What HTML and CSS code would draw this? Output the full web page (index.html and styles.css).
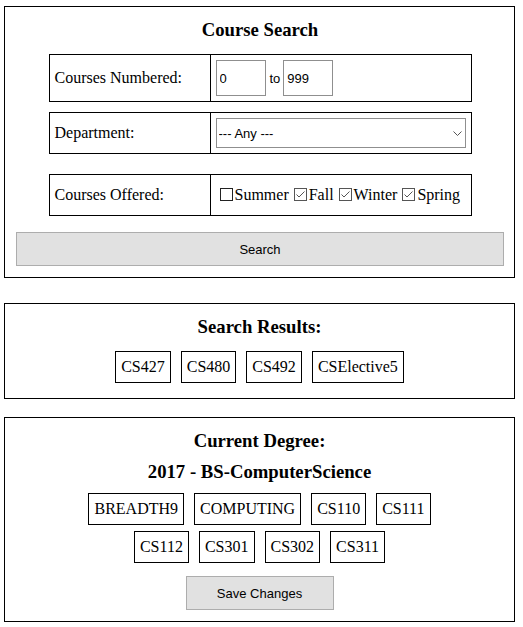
FILE: index.html
```html
<!DOCTYPE html>
<html>
<head>
<meta charset="utf-8">
<link rel="stylesheet" href="styles.css">
</head>
<body>
<div class="panel panel-search">
  <h3 class="title">Course Search</h3>
  <div class="field field-tall">
    <div class="field-label">Courses Numbered:</div>
    <div class="field-control">
      <input class="num" type="text" value="0"><span class="to">to</span><input class="num" type="text" value="999">
    </div>
  </div>
  <div class="field field-dept">
    <div class="field-label">Department:</div>
    <div class="field-control">
      <div class="select-wrap">
        <select class="select"><option>--- Any ---</option></select>
        <svg class="chev" width="9" height="5" viewBox="0 0 9 5"><path d="M0.5 0.5 L4.5 4.5 L8.5 0.5" fill="none" stroke="#555" stroke-width="1"/></svg>
      </div>
    </div>
  </div>
  <div class="field field-terms">
    <div class="field-label">Courses Offered:</div>
    <div class="field-control terms">
      <span class="term"><svg class="box" width="13" height="13" viewBox="0 0 13 13"><rect x="0.5" y="0.5" width="12" height="12" fill="none" stroke="#222"/></svg>Summer</span>
      <span class="term"><svg class="box" width="13" height="13" viewBox="0 0 13 13"><rect x="0.5" y="0.5" width="12" height="12" fill="none" stroke="#555"/><path d="M2.5 6.5 L5 9 L10.5 3.5" fill="none" stroke="#555"/></svg>Fall</span>
      <span class="term"><svg class="box" width="13" height="13" viewBox="0 0 13 13"><rect x="0.5" y="0.5" width="12" height="12" fill="none" stroke="#555"/><path d="M2.5 6.5 L5 9 L10.5 3.5" fill="none" stroke="#555"/></svg>Winter</span>
      <span class="term"><svg class="box" width="13" height="13" viewBox="0 0 13 13"><rect x="0.5" y="0.5" width="12" height="12" fill="none" stroke="#555"/><path d="M2.5 6.5 L5 9 L10.5 3.5" fill="none" stroke="#555"/></svg>Spring</span>
    </div>
  </div>
  <button class="btn btn-search">Search</button>
</div>

<div class="panel panel-results">
  <h3 class="title">Search Results:</h3>
  <div class="chips">
    <span class="chip">CS427</span>
    <span class="chip">CS480</span>
    <span class="chip">CS492</span>
    <span class="chip">CSElective5</span>
  </div>
</div>

<div class="panel panel-degree">
  <h3 class="title">Current Degree:</h3>
  <h3 class="title subtitle">2017 - BS-ComputerScience</h3>
  <div class="chips chips-degree">
    <span class="chip">BREADTH9</span>
    <span class="chip">COMPUTING</span>
    <span class="chip">CS110</span>
    <span class="chip">CS111</span>
    <span class="chip">CS112</span>
    <span class="chip">CS301</span>
    <span class="chip">CS302</span>
    <span class="chip">CS311</span>
  </div>
  <div class="save-row"><button class="btn btn-save">Save Changes</button></div>
</div>
</body>
</html>
```

FILE: styles.css
```css
html, body {
  margin: 0;
  padding: 0;
  background: #fff;
}
body {
  font-family: "Liberation Serif", "Times New Roman", serif;
  font-size: 16px;
  color: #000;
  padding-top: 6px;
}
.panel {
  box-sizing: border-box;
  width: 511px;
  margin-left: 4px;
  border: 1px solid #000;
  display: flex;
  flex-direction: column;
}
.panel-search {
  padding: 0 10px 11px 11px;
  margin-bottom: 25px;
}
.panel-results {
  padding-bottom: 15px;
  margin-bottom: 18px;
}
.panel-degree {
  padding-bottom: 11px;
}
.title {
  margin: 12px 0 0;
  font-size: 18.72px;
  font-weight: bold;
  line-height: 22px;
  text-align: center;
}
.panel-degree .subtitle {
  margin-top: 9px;
}
.field {
  display: grid;
  grid-template-columns: 161px 260px;
  border: 1px solid #000;
  margin: 0 auto;
  width: max-content;
}
.field-tall { margin-top: 13px; }
.field-dept { margin-top: 10px; }
.field-terms { margin-top: 20px; }
.field-label {
  box-sizing: border-box;
  border-right: 1px solid #000;
  padding-left: 5px;
  display: flex;
  align-items: center;
}
.field-control {
  display: flex;
  align-items: center;
  padding: 5px 0 5px 5px;
  font-family: "Liberation Sans", Arial, sans-serif;
  font-size: 13px;
}
.num {
  box-sizing: border-box;
  width: 50px;
  height: 36px;
  border: 1px solid #8f8f8f;
  padding: 0 3px;
  margin: 0;
  font-family: "Liberation Sans", Arial, sans-serif;
  font-size: 13px;
  color: #000;
  background: #fff;
}
.to {
  margin: 0 3px 0 4px;
}
.select-wrap {
  position: relative;
  width: 250px;
  height: 30px;
}
.select {
  box-sizing: border-box;
  width: 250px;
  height: 30px;
  border: 1px solid #8f8f8f;
  padding: 0 0 0 2px;
  margin: 0;
  background: #fff;
  appearance: none;
  -webkit-appearance: none;
  font-family: "Liberation Sans", Arial, sans-serif;
  font-size: 13px;
  color: #000;
  border-radius: 0;
}
.chev {
  position: absolute;
  left: 237px;
  top: 13px;
}
.terms {
  box-sizing: border-box;
  height: 40px;
  padding: 0 0 0 8px;
  font-family: "Liberation Serif", "Times New Roman", serif;
  font-size: 16px;
  gap: 4px;
}
.term {
  white-space: nowrap;
}
.box {
  vertical-align: -1px;
  margin: 0 2px 0 1px;
}
.btn {
  box-sizing: border-box;
  height: 34px;
  background: #e1e1e1;
  border: 1px solid #adadad;
  border-radius: 0;
  font-family: "Liberation Sans", Arial, sans-serif;
  font-size: 13px;
  color: #000;
  padding: 0;
}
.btn-search {
  width: 100%;
  margin-top: 16px;
}
.chips {
  display: flex;
  flex-wrap: wrap;
  justify-content: center;
  gap: 6px 10px;
  margin-top: 13px;
}
.chips-degree {
  width: 360px;
  margin: 10px auto 0;
}
.chip {
  border: 1px solid #000;
  padding: 6px 5px;
  line-height: 18px;
  font-size: 16px;
}
.save-row {
  display: flex;
  justify-content: center;
  margin-top: 13px;
}
.btn-save {
  width: 148px;
}
```
